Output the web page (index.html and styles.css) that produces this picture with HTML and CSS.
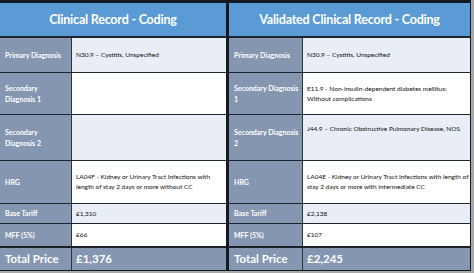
FILE: index.html
```html
<!DOCTYPE html>
<html>
<head>
<meta charset="utf-8">
<link rel="stylesheet" href="styles.css">
</head>
<body>
<div class="sheet">
  <section class="tbl tbl-left">
    <div class="hdr">Clinical Record - Coding</div>
    <div class="row h1 alt"><div class="lbl">Primary Diagnosis</div><div class="val">N30.9 – Cystitis, Unspecified</div></div>
    <div class="row h2"><div class="lbl">Secondary<br>Diagnosis 1</div><div class="val"></div></div>
    <div class="row h3 alt"><div class="lbl">Secondary<br>Diagnosis 2</div><div class="val"></div></div>
    <div class="row h4"><div class="lbl">HRG</div><div class="val">LA04F - Kidney or Urinary Tract Infections with<br>length of stay 2 days or more without CC</div></div>
    <div class="row h5 alt"><div class="lbl">Base Tariff</div><div class="val">£1,310</div></div>
    <div class="row h6"><div class="lbl">MFF (5%)</div><div class="val">£66</div></div>
    <div class="row total"><div class="lbl">Total Price</div><div class="val">£1,376</div></div>
  </section>
  <section class="tbl tbl-right">
    <div class="hdr">Validated Clinical Record - Coding</div>
    <div class="row h1 alt"><div class="lbl">Primary Diagnosis</div><div class="val">N30.9 – Cystitis, Unspecified</div></div>
    <div class="row h2"><div class="lbl">Secondary Diagnosis<br>1</div><div class="val">E11.9 - Non-insulin-dependent diabetes mellitus:<br>Without complications</div></div>
    <div class="row h3 alt"><div class="lbl">Secondary Diagnosis<br>2</div><div class="val val-top">J44.9 – Chronic Obstructive Pulmonary Disease, NOS</div></div>
    <div class="row h4"><div class="lbl">HRG</div><div class="val">LA04E - Kidney or Urinary Tract Infections with length of<br>stay 2 days or more with Intermediate CC</div></div>
    <div class="row h5 alt"><div class="lbl">Base Tariff</div><div class="val">£2,138</div></div>
    <div class="row h6"><div class="lbl">MFF (5%)</div><div class="val">£107</div></div>
    <div class="row total"><div class="lbl">Total Price</div><div class="val">£2,245</div></div>
  </section>
</div>
</body>
</html>
```

FILE: styles.css
```css
* { box-sizing: border-box; }
html, body { margin: 0; padding: 0; }
body {
  width: 474px;
  height: 273px;
  background: #a9a9a9;
  font-family: Lato, "Open Sans", sans-serif;
  overflow: hidden;
}
.sheet {
  width: 471px;
  height: 271px;
  background: #151a22;
  padding: 3px 1px 1px 0;
  display: grid;
  grid-template-columns: 226px 241px;
  column-gap: 3px;
}
.tbl {
  display: flex;
  flex-direction: column;
}
.hdr {
  height: 33px;
  background: #5b9bd5;
  color: #fff;
  font-weight: 700;
  font-size: 12.5px;
  letter-spacing: -0.2px;
  display: flex;
  align-items: center;
  justify-content: center;
}
.row {
  display: grid;
  grid-template-columns: 72px 1fr;
  border-top: 1px solid #1e2530;
  background: #fff;
}
.tbl-right .row { grid-template-columns: 74px 1fr; }
.row.alt { background: #e9eef6; }
.h1 { height: 36px; border-top-width: 2px; }
.h2 { height: 42px; }
.h3 { height: 46px; }
.h4 { height: 43px; }
.h5 { height: 20px; }
.h6 { height: 23px; }
.lbl {
  background: #8496b0;
  border-right: 1px solid #2a3240;
  color: #fff;
  font-weight: 700;
  font-size: 7px;
  line-height: 10.5px;
  padding-left: 5px;
  display: flex;
  align-items: center;
}
.val {
  color: #111;
  font-size: 6.5px;
  line-height: 10px;
  padding-left: 4px;
  display: flex;
  align-items: center;
}
.val-top { align-items: flex-start; padding-top: 9px; }
.total {
  height: 24px;
  border-top: 2px solid #1a1f27;
  background: #8496b0;
}
.total .lbl, .total .val {
  color: #fff;
  font-weight: 700;
  font-size: 11.5px;
  background: #8496b0;
}
.total .val { padding-left: 4px; }
```
